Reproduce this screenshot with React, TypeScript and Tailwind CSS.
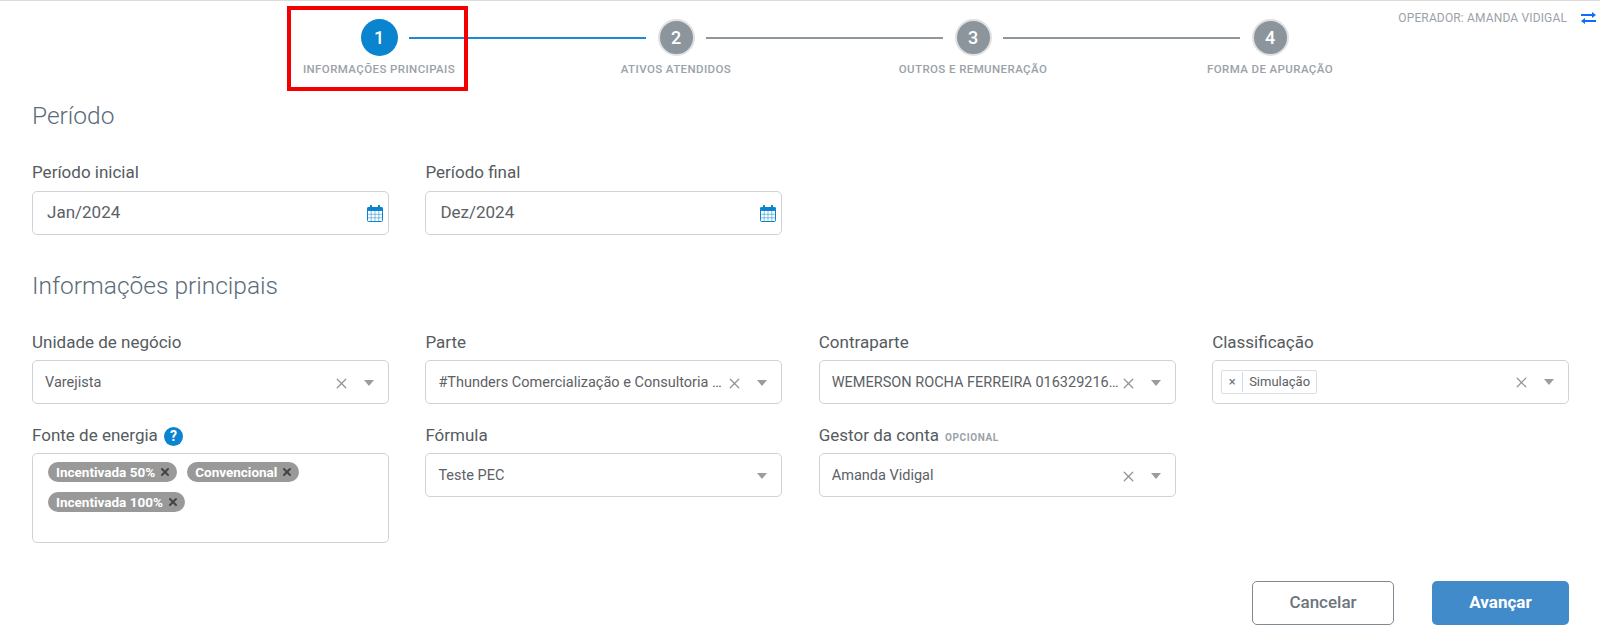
import { X } from "lucide-react";

function Step({ n, label, active }: { n: number; label: string; active?: boolean }) {
  return (
    <div className="w-[160px] shrink-0 flex flex-col items-center">
      <div
        className={
          active
            ? "w-[37px] h-[37px] rounded-full bg-[#0a84ce] text-white flex items-center justify-center text-[18px] font-medium"
            : "w-[37px] h-[37px] rounded-full bg-[#8c959b] border-2 border-[#dfe1e2] text-white flex items-center justify-center text-[18px] font-medium"
        }
      >
        {n}
      </div>
      <div className="mt-[5px] text-[11.5px] leading-[16px] font-medium tracking-[0.4px] text-[#9aa2a8] whitespace-nowrap">
        {label}
      </div>
    </div>
  );
}

function Line({ active }: { active?: boolean }) {
  return (
    <div
      className={
        active
          ? "w-[237px] h-[2px] mt-[18px] mx-[-50px] shrink-0 bg-[#1a8ad4]"
          : "w-[237px] h-[2px] mt-[18px] mx-[-50px] shrink-0 bg-[#8f979c]"
      }
    />
  );
}

function Label({ children }: { children: React.ReactNode }) {
  return <div className="h-[24px] flex items-center gap-[6px] text-[17px] text-[#555b60]">{children}</div>;
}

function CalendarIcon() {
  return (
    <svg width="16" height="17" viewBox="0 0 16 17" fill="none" stroke="#0a84ce" strokeWidth="1">
      <rect x="0.5" y="2.5" width="15" height="14" rx="1" />
      <rect x="0.5" y="2.5" width="15" height="3" rx="1" fill="#0a84ce" />
      <path d="M4 0.8v3M12 0.8v3" strokeWidth="2" strokeLinecap="round" />
      <path d="M4.2 6v10M8 6v10M11.8 6v10M1 9.3h14M1 12.8h14" strokeWidth="0.5" />
    </svg>
  );
}

function DateField({ label, value }: { label: string; value: string }) {
  return (
    <div className="flex flex-col gap-[6px]">
      <Label>{label}</Label>
      <div className="h-[44px] rounded-[5px] border border-[#d0d3d5] pl-[14px] pr-[5px] flex items-center justify-between text-[17px] text-[#5c6166]">
        <span>{value}</span>
        <CalendarIcon />
      </div>
    </div>
  );
}

function Clear() {
  return <X className="shrink-0 text-[#8e9396]" size={17} strokeWidth={1.7} />;
}

function Arrow() {
  return <div className="shrink-0 w-0 h-0 border-x-[5.5px] border-x-transparent border-t-[6px] border-t-[#999da0]" />;
}

function SelectField({
  label,
  value,
  clear = true,
  tag,
}: {
  label: React.ReactNode;
  value: React.ReactNode;
  clear?: boolean;
  tag?: boolean;
}) {
  return (
    <div>
      <Label>{label}</Label>
      <div
        className={
          tag
            ? "mt-[5px] h-[44px] rounded-[5px] border border-[#d0d3d5] pl-[8px] pr-[14px] flex items-center text-[14.5px] text-[#5c6166]"
            : "mt-[5px] h-[44px] rounded-[5px] border border-[#d0d3d5] pl-[12px] pr-[14px] pt-[2px] flex items-center text-[14.5px] text-[#5c6166]"
        }
      >
        <div className="flex-1 min-w-0 truncate">{value}</div>
        {clear && <div className="mr-[14px]"><Clear /></div>}
        <Arrow />
      </div>
    </div>
  );
}

function Chip({ text }: { text: string }) {
  return (
    <span className="h-[20px] pl-[8px] pr-[6px] rounded-full bg-[#999999] text-white text-[13.5px] font-bold flex items-center gap-[4px] whitespace-nowrap">
      {text}
      <X size={12} strokeWidth={4} className="text-[#444444]" />
    </span>
  );
}

export default function App() {
  return (
    <div className="relative w-full h-[631px] overflow-hidden bg-white border-t border-[#dcdcdc] font-['Roboto',sans-serif]">
      {/* marcação vermelha do print */}
      <div className="absolute left-[287px] top-[5px] w-[181px] h-[85px] border-4 border-[#f50000]" />

      <div className="flex items-start pt-[18px]">
        <div className="flex items-start ml-[299px]">
          <Step n={1} label="INFORMAÇÕES PRINCIPAIS" active />
          <Line active />
          <Step n={2} label="ATIVOS ATENDIDOS" />
          <Line />
          <Step n={3} label="OUTROS E REMUNERAÇÃO" />
          <Line />
          <Step n={4} label="FORMA DE APURAÇÃO" />
        </div>
        <div className="ml-auto pr-[4px] mt-[-10px] flex items-center gap-[14px] text-[12px] tracking-[0.15px] text-[#9aa2a8]">
          OPERADOR: AMANDA VIDIGAL
          <svg width="15" height="12" viewBox="0 0 15 12" fill="#0d6efd">
            <path d="M0 2h11V0l4 3-4 3V4H0zM15 8H4V6l-4 3 4 3v-2h11z" />
          </svg>
        </div>
      </div>

      <div className="pl-[32px] pr-[31px]">
        <h2 className="mt-[23px] text-[24.5px] leading-[32px] font-light text-[#5a6c7a]">Período</h2>

        <div className="mt-[29px] grid grid-cols-4 gap-x-[36.5px]">
          <DateField label="Período inicial" value="Jan/2024" />
          <DateField label="Período final" value="Dez/2024" />
        </div>

        <h2 className="mt-[35px] text-[24.5px] leading-[32px] font-light text-[#5a6c7a]">Informações principais</h2>

        <div className="mt-[29px] grid grid-cols-4 gap-x-[36.5px] gap-y-[20px] items-start">
          <SelectField label="Unidade de negócio" value="Varejista" />
          <SelectField label="Parte" value="#Thunders Comercialização e Consultoria de Energia Ltda" />
          <SelectField label="Contraparte" value="WEMERSON ROCHA FERREIRA 01632921600000" />
          <SelectField
            tag
            label="Classificação"
            value={
              <span className="inline-flex h-[24px] items-center rounded-[2px] border border-[#dcdfe1] text-[13px] align-middle">
                <span className="w-[21px] text-center text-[#6b7075] border-r border-[#bfdfff]">×</span>
                <span className="px-[6px]">Simulação</span>
              </span>
            }
          />

          <div>
            <Label>
              Fonte de energia
              <span className="w-[19px] h-[19px] rounded-full bg-[#0a84ce] text-white text-[14px] font-bold flex items-center justify-center">?</span>
            </Label>
            <div className="mt-[5px] h-[90px] rounded-[5px] border border-[#d0d3d5] px-[15px] pt-[8px] flex flex-wrap content-start gap-x-[10px] gap-y-[10px]">
              <Chip text="Incentivada 50%" />
              <Chip text="Convencional" />
              <Chip text="Incentivada 100%" />
            </div>
          </div>
          <SelectField label="Fórmula" value="Teste PEC" clear={false} />
          <SelectField
            label={
              <>
                Gestor da conta
                <span className="text-[10px] font-bold tracking-[0.6px] text-[#9aa2a8] mt-[2px]">OPCIONAL</span>
              </>
            }
            value="Amanda Vidigal"
          />
        </div>

        <div className="mt-[38px] flex justify-end gap-[38px]">
          <button className="w-[142px] h-[44px] rounded-[5px] border border-[#7f8a92] text-[17px] font-medium text-[#6c757d]">Cancelar</button>
          <button className="w-[137px] h-[44px] rounded-[5px] bg-[#428bca] text-[17px] font-bold text-white">Avançar</button>
        </div>
      </div>
    </div>
  );
}
